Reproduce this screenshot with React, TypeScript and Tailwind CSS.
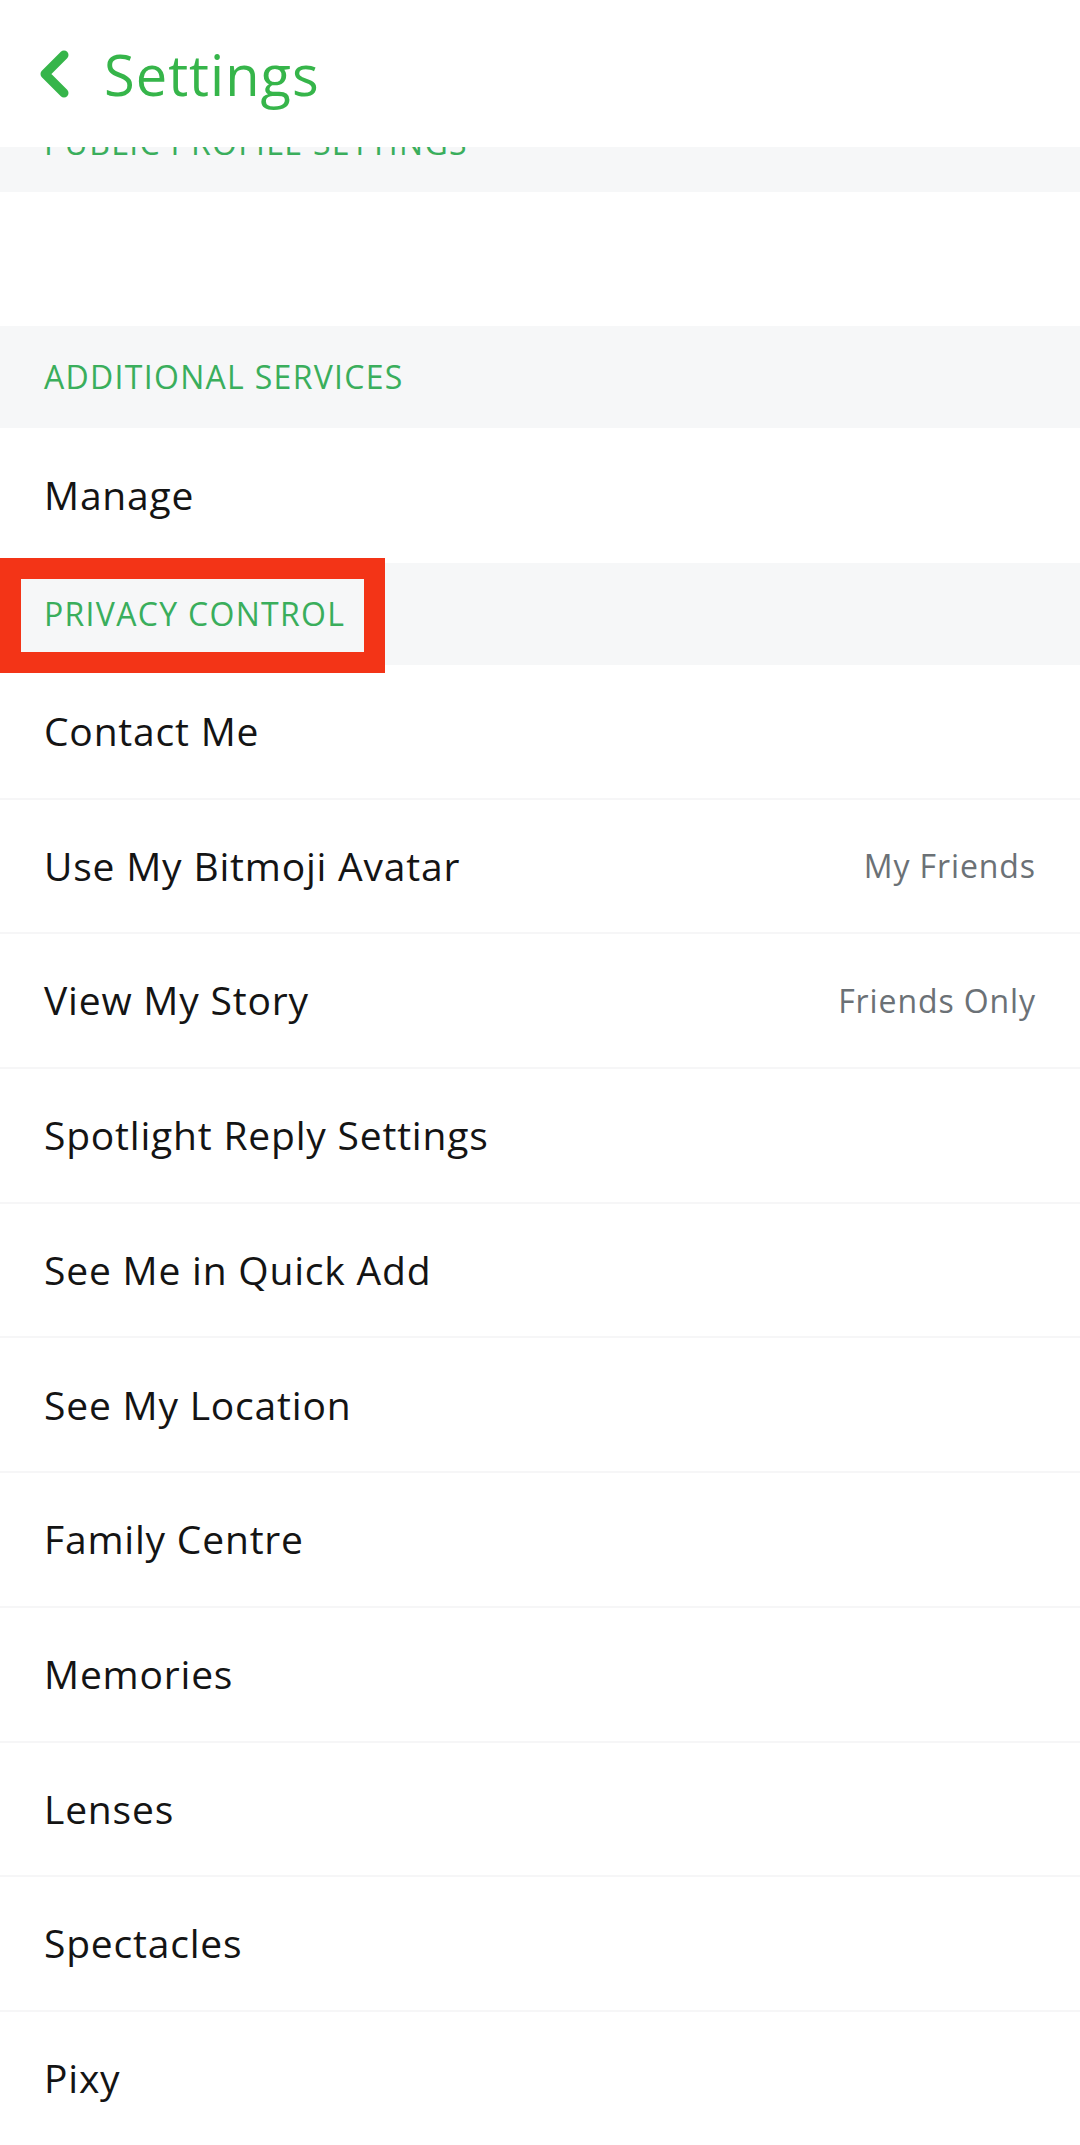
import React from "react";

interface RowProps {
  label: string;
  value?: string;
}

const Row = ({ label, value }: RowProps) => {
  return (
    <div className="flex items-center justify-between h-[134.7px] pl-[44px] pr-[44px] border-b-2 border-[#f6f6f7] bg-white">
      <span className="text-[39px] tracking-[0.8px] text-[#141414]">{label}</span>
      {value && <span className="text-[32px] tracking-[0.9px] text-[#6b7176]">{value}</span>}
    </div>
  );
};

const SectionHeader = ({ title }: { title: string }) => {
  return (
    <div className="flex items-center h-[102px] pl-[44px] bg-[#f6f7f8]">
      <span className="text-[32px] tracking-[1.3px] text-[#3aae5c]">{title}</span>
    </div>
  );
};

const rows: RowProps[] = [
  { label: "Contact Me" },
  { label: "Use My Bitmoji Avatar", value: "My Friends" },
  { label: "View My Story", value: "Friends Only" },
  { label: "Spotlight Reply Settings" },
  { label: "See Me in Quick Add" },
  { label: "See My Location" },
  { label: "Family Centre" },
  { label: "Memories" },
  { label: "Lenses" },
  { label: "Spectacles" },
  { label: "Pixy" },
];

export default function App() {
  return (
    <div className="w-[1080px] h-[2145px] overflow-hidden bg-white font-['Open_Sans','Lato',sans-serif]">
      {/* nav bar */}
      <div className="flex items-center h-[147px] pl-[38px] bg-white">
        <svg width="32" height="48" viewBox="0 0 32 48">
          <path
            d="M26 5 L7 24 L26 43"
            fill="none"
            stroke="#36b54a"
            strokeWidth="9"
            strokeLinecap="round"
            strokeLinejoin="round"
          />
        </svg>
        <span className="ml-[34px] text-[56px] tracking-[1px] text-[#36b54a] leading-none">Settings</span>
      </div>

      {/* sticky section header, partly hidden under the nav bar */}
      <div className="h-[45px] overflow-hidden bg-[#f6f7f8]">
        <div className="flex items-center h-[102px] pl-[44px] mt-[-55px]">
          <span className="text-[32px] tracking-[1.3px] text-[#3aae5c]">PUBLIC PROFILE SETTINGS</span>
        </div>
      </div>

      <div className="h-[134px] bg-white" />

      <SectionHeader title="ADDITIONAL SERVICES" />
      <div className="flex items-center h-[135px] pl-[44px] bg-white">
        <span className="text-[39px] tracking-[0.8px] text-[#141414]">Manage</span>
      </div>

      <div className="relative">
        <SectionHeader title="PRIVACY CONTROL" />
        <div className="absolute left-0 top-[-5px] w-[385px] h-[115px] border-[21px] border-[#f33417]" />
      </div>

      {rows.map((r) => (
        <Row key={r.label} label={r.label} value={r.value} />
      ))}
    </div>
  );
}
